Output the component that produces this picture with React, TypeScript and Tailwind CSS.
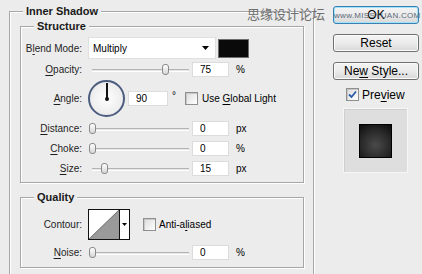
import type { FunctionComponent, ReactNode } from "react";

const Group: FunctionComponent<{ title: string; className: string; children: ReactNode }> = ({
  title,
  className,
  children,
}) => (
  <div
    className={`relative border border-[#a7a7a7] shadow-[inset_1px_1px_0_#fff,1px_1px_0_#fff] ${className}`}
  >
    <div className="absolute -top-[8px] left-0 flex w-full">
      <div className="w-[13px] shrink-0" />
      <div className="shrink-0 whitespace-nowrap bg-[#ececec] px-[3px] text-[11px] font-bold leading-[14px] text-[#1a1a1a]">
        {title}
      </div>
    </div>
    {children}
  </div>
);

const Label: FunctionComponent<{ children: ReactNode }> = ({ children }) => (
  <div className="flex w-[62px] shrink-0 justify-end whitespace-nowrap pr-px leading-[13px] text-[#1e1e1e]">
    <span>{children}</span>
  </div>
);

const U: FunctionComponent<{ children: ReactNode }> = ({ children }) => (
  <span className="underline underline-offset-[2px]">{children}</span>
);

const Field: FunctionComponent<{ value: string; w?: string }> = ({ value, w = "w-[37px]" }) => (
  <div
    className={`flex h-[15px] ${w} shrink-0 items-center border border-[#dcdcdc] bg-white pl-[7px] leading-none`}
  >
    {value}
  </div>
);

const Slider: FunctionComponent<{ thumb: number }> = ({ thumb }) => (
  <div className="relative ml-[5px] h-[15px] w-[104px] shrink-0">
    <div className="absolute left-[4px] top-[7px] h-[2px] w-[97px] border-t border-[#b4b4b4] bg-[#e6e6e6] shadow-[0_1px_0_#fff]" />
    <div
      className="absolute top-[2px] h-[11px] w-[7px] rounded-[3px] border border-[#8a8a8a] bg-gradient-to-b from-white to-[#d6d6d6]"
      style={{ left: thumb }}
    />
  </div>
);

const Check: FunctionComponent<{ checked?: boolean }> = ({ checked }) => (
  <div className="flex h-[13px] w-[13px] shrink-0 items-center justify-center border border-[#8e8f8f] bg-gradient-to-br from-[#dcdcdc] to-white shadow-[inset_1px_1px_0_#c8c8c8]">
    {checked && (
      <svg width="9" height="9" viewBox="0 0 9 9">
        <path d="M1 4.5 L3.5 7 L8 1.5" stroke="#2a5ba8" strokeWidth="1.8" fill="none" />
      </svg>
    )}
  </div>
);

const Button: FunctionComponent<{ children: ReactNode; primary?: boolean }> = ({ children, primary }) => (
  <div
    className={`flex h-[18px] w-[86px] items-center justify-center rounded-[3px] border bg-gradient-to-b from-[#f4f4f4] via-[#ebebeb] to-[#d8d8d8] text-[12px] leading-none text-black ${
      primary
        ? "border-[#3c7fb1] shadow-[inset_0_0_0_1px_#9fe2fb]"
        : "border-[#707070] shadow-[inset_0_0_0_1px_#fbfbfb]"
    }`}
  >
    <span>{children}</span>
  </div>
);

export default function App() {
  return (
    <div className="relative flex h-[274px] w-[422px] overflow-hidden bg-[#ececec] font-['Liberation_Sans',Tahoma,sans-serif] text-[10px] text-black">
      <div className="w-[9px] shrink-0" />
      <Group title="Inner Shadow" className="mt-[11px] h-[300px] w-[305px] shrink-0">
        <Group title="Structure" className="ml-[10px] mt-[14px] h-[157px] w-[284px]">
          <div className="flex flex-col">
            <div className="mt-[10px] flex h-[22px] items-center">
              <Label>
                B<U>l</U>end Mode:
              </Label>
              <div className="ml-[5px] flex h-[22px] w-[128px] items-center justify-between border border-[#e0e0e0] bg-white pl-[4px] pr-[6px]">
                <span>Multiply</span>
                <svg width="7" height="4" viewBox="0 0 7 4">
                  <path d="M0 0 H7 L3.5 4 Z" fill="#000" />
                </svg>
              </div>
              <div className="ml-[2px] h-[19px] w-[31px] border border-[#6e6e6e] bg-[#0a0a0a]" />
            </div>
            <div className="mt-[3px] flex h-[15px] items-center">
              <Label>
                <U>O</U>pacity:
              </Label>
              <Slider thumb={74} />
              <Field value="75" />
              <span className="ml-[7px]">%</span>
            </div>
            <div className="mt-[3px] flex h-[37px] items-center">
              <Label>
                <U>A</U>ngle:
              </Label>
              <div className="relative ml-[5px] h-[37px] w-[37px] shrink-0 rounded-full border-2 border-[#4d5d80] bg-radial from-white to-[#e4e4e4]">
                <div className="absolute left-[15.5px] top-[1px] h-[16px] w-[2px] bg-[#111]" />
                <div className="absolute left-[14.5px] top-[15px] h-[4px] w-[4px] rounded-full bg-[#111]" />
              </div>
              <div className="ml-[3px]">
                <Field value="90" w="w-[40px]" />
              </div>
              <span className="mb-[6px] w-[17px] pl-[4px]">°</span>
              <Check />
              <span className="ml-[4px]">
                Use <U>G</U>lobal Light
              </span>
            </div>
            <div className="mt-[4px] flex h-[15px] items-center">
              <Label>
                <U>D</U>istance:
              </Label>
              <Slider thumb={1} />
              <Field value="0" />
              <span className="ml-[7px]">px</span>
            </div>
            <div className="mt-[5px] flex h-[15px] items-center">
              <Label>
                <U>C</U>hoke:
              </Label>
              <Slider thumb={1} />
              <Field value="0" />
              <span className="ml-[7px]">%</span>
            </div>
            <div className="mt-[5px] flex h-[15px] items-center">
              <Label>
                <U>S</U>ize:
              </Label>
              <Slider thumb={13} />
              <Field value="15" />
              <span className="ml-[7px]">px</span>
            </div>
          </div>
        </Group>
        <Group title="Quality" className="ml-[10px] mt-[14px] h-[71px] w-[284px]">
          <div className="flex flex-col">
            <div className="mt-[11px] flex h-[31px] items-center">
              <Label>Contour:</Label>
              <div className="ml-[5px] flex h-[31px] w-[42px] border border-[#111] bg-white">
                <svg width="30" height="29" viewBox="0 0 30 29" className="shrink-0">
                  <path d="M0 29 L30 0 L30 29 Z" fill="#9a9a9a" />
                  <path d="M0 29 L30 0" stroke="#555" strokeWidth="0.8" />
                </svg>
                <div className="flex flex-1 items-center justify-center border-l border-[#111]">
                  <svg width="5" height="3" viewBox="0 0 5 3">
                    <path d="M0 0 H5 L2.5 3 Z" fill="#000" />
                  </svg>
                </div>
              </div>
              <div className="ml-[13px]">
                <Check />
              </div>
              <span className="ml-[3px]">
                Anti-a<U>l</U>iased
              </span>
            </div>
            <div className="mt-[5px] flex h-[15px] items-center">
              <Label>
                <U>N</U>oise:
              </Label>
              <Slider thumb={1} />
              <Field value="0" />
              <span className="ml-[7px]">%</span>
            </div>
          </div>
        </Group>
      </Group>

      <div className="ml-[19px] flex flex-col pt-[6px]">
        <div className="flex flex-col gap-[10px]">
          <Button primary>OK</Button>
          <Button>Reset</Button>
          <Button>
            Ne<U>w</U> Style...
          </Button>
        </div>
        <div className="ml-[13px] mt-[8px] flex h-[13px] items-center">
          <Check checked />
          <span className="ml-[3px] text-[12px]">
            Pre<U>v</U>iew
          </span>
        </div>
        <div className="ml-[10px] mt-[7px] flex h-[65px] w-[65px] items-center justify-center border border-[#f6f6f6] bg-[#dedede] shadow-[inset_1px_1px_0_#cfcfcf]">
          <div className="h-[34px] w-[33px] border border-black bg-[radial-gradient(circle_at_50%_62%,#4a4a4a,#2a2a2a_55%,#0c0c0c)]" />
        </div>
      </div>

      <div className="pointer-events-none absolute left-[247px] top-[6px] font-['Noto_Sans_CJK_SC',sans-serif] text-[13px] leading-[16px] text-[#6f6f6f]">
        思缘设计论坛
      </div>
      <div className="pointer-events-none absolute left-[334px] top-[11px] font-['Liberation_Sans',sans-serif] text-[8px] leading-[10px] tracking-[0.3px] text-[#5a6a7a]">
        www.MISSYUAN.COM
      </div>
    </div>
  );
}
